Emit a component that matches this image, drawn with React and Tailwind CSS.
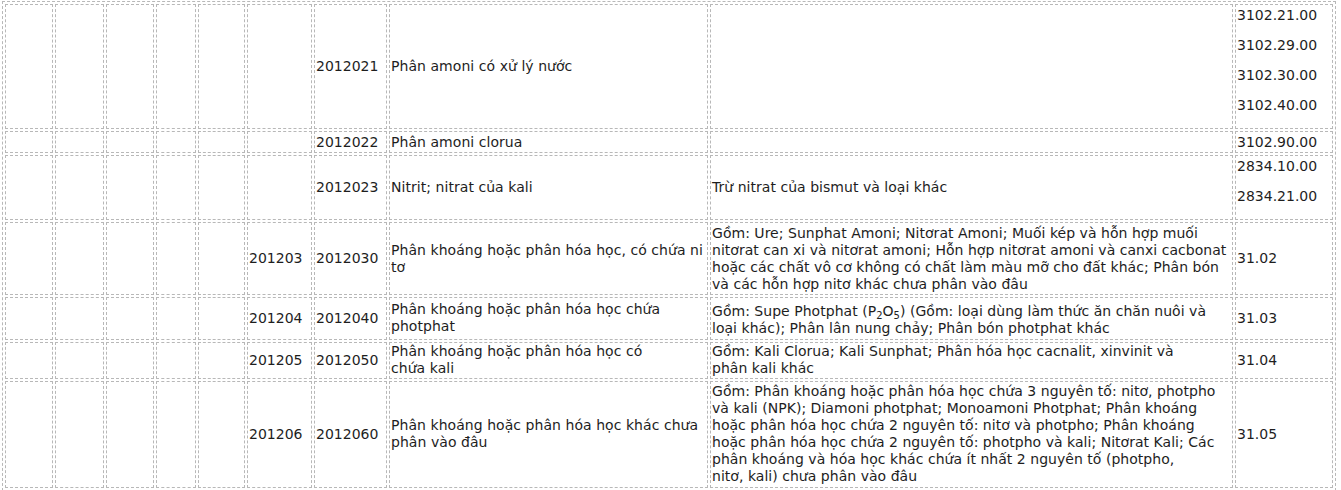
import React from "react";

const base = "border border-dashed border-[#b8b8b8] px-[1px] align-middle";
const txtN = "tracking-[0.05px] whitespace-nowrap";
const txtD = "tracking-[0.03px] whitespace-nowrap";

function Codes({ list }) {
  return (
    <div>
      {list.map((c, i) => (
        <div key={i} className="mb-[13px]">
          {c}
        </div>
      ))}
    </div>
  );
}

function Lines({ list }) {
  return (
    <>
      {list.map((l, i) => (
        <div key={i}>{l}</div>
      ))}
    </>
  );
}

const Sub = ({ children }) => (
  <span className="relative top-[3px] text-[10px] leading-[0px]">{children}</span>
);

const rows = [
  {
    g: "",
    c: "2012021",
    n: "Phân amoni có xử lý nước",
    d: "",
    k: <Codes list={["3102.21.00", "3102.29.00", "3102.30.00", "3102.40.00"]} />,
  },
  { g: "", c: "2012022", n: "Phân amoni clorua", d: "", k: "3102.90.00" },
  {
    g: "",
    c: "2012023",
    n: "Nitrit; nitrat của kali",
    d: "Trừ nitrat của bismut và loại khác",
    k: <Codes list={["2834.10.00", "2834.21.00"]} />,
  },
  {
    g: "201203",
    c: "2012030",
    n: <Lines list={["Phân khoáng hoặc phân hóa học, có chứa ni", "tơ"]} />,
    d: (
      <Lines
        list={[
          "Gồm: Ure; Sunphat Amoni; Nitơrat Amoni; Muối kép và hỗn hợp muối",
          "nitơrat can xi và nitơrat amoni; Hỗn hợp nitơrat amoni và canxi cacbonat",
          "hoặc các chất vô cơ không có chất làm màu mỡ cho đất khác; Phân bón",
          "và các hỗn hợp nitơ khác chưa phân vào đâu",
        ]}
      />
    ),
    k: "31.02",
  },
  {
    g: "201204",
    c: "2012040",
    n: <Lines list={["Phân khoáng hoặc phân hóa học chứa", "photphat"]} />,
    dPad: true,
    d: (
      <Lines
        list={[
          <>
            Gồm: Supe Photphat (P<Sub>2</Sub>O<Sub>5</Sub>) (Gồm: loại dùng làm thức ăn chăn nuôi và
          </>,
          "loại khác); Phân lân nung chảy; Phân bón photphat khác",
        ]}
      />
    ),
    k: "31.03",
  },
  {
    g: "201205",
    c: "2012050",
    tight: true,
    n: <Lines list={["Phân khoáng hoặc phân hóa học có", "chứa kali"]} />,
    d: (
      <Lines
        list={[
          "Gồm: Kali Clorua; Kali Sunphat; Phân hóa học cacnalit, xinvinit và",
          "phân kali khác",
        ]}
      />
    ),
    k: "31.04",
  },
  {
    g: "201206",
    c: "2012060",
    n: <Lines list={["Phân khoáng hoặc phân hóa học khác chưa", "phân vào đâu"]} />,
    d: (
      <Lines
        list={[
          "Gồm: Phân khoáng hoặc phân hóa học chứa 3 nguyên tố: nitơ, photpho",
          "và kali (NPK); Diamoni photphat; Monoamoni Photphat; Phân khoáng",
          "hoặc phân hóa học chứa 2 nguyên tố: nitơ và photpho; Phân khoáng",
          "hoặc phân hóa học chứa 2 nguyên tố: photpho và kali; Nitơrat Kali; Các",
          "phân khoáng và hóa học khác chứa ít nhất 2 nguyên tố (photpho,",
          "nitơ, kali) chưa phân vào đâu",
        ]}
      />
    ),
    k: "31.05",
  },
];

export default function App() {
  return (
    <div className="bg-white w-[1341px] h-[490px] overflow-hidden pt-[1px] pl-[2px]">
      <table className="table-fixed border-separate border-spacing-[2px] border border-dashed border-[#b8b8b8] w-[1334px] font-['DejaVu_Sans',Verdana,sans-serif] text-[14px] leading-[17px] text-[#1e1e1e]">
        <colgroup>
          <col className="w-[48px]" />
          <col className="w-[49px]" />
          <col className="w-[48px]" />
          <col className="w-[40px]" />
          <col className="w-[47px]" />
          <col className="w-[65px]" />
          <col className="w-[73px]" />
          <col className="w-[319px]" />
          <col className="w-[523px]" />
          <col className="w-[98px]" />
        </colgroup>
        <tbody>
          {rows.map((r, i) => {
            const cell = `${base} ${r.tight ? "py-[0.5px]" : "py-[1.5px]"}`;
            return (
              <tr key={i}>
                <td className={cell}></td>
                <td className={cell}></td>
                <td className={cell}></td>
                <td className={cell}></td>
                <td className={cell}></td>
                <td className={cell}>{r.g}</td>
                <td className={cell}>{r.c}</td>
                <td className={`${cell} ${txtN}`}>{r.n}</td>
                <td className={`${cell} ${txtD} ${r.dPad ? "pt-[5px]" : ""}`}>{r.d}</td>
                <td className={cell}>{r.k}</td>
              </tr>
            );
          })}
        </tbody>
      </table>
    </div>
  );
}
